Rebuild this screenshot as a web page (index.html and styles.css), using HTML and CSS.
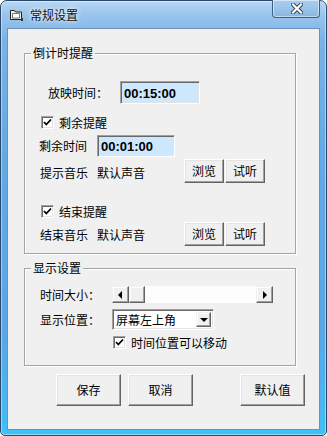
FILE: index.html
```html
<!DOCTYPE html>
<html lang="zh-CN">
<head>
<meta charset="utf-8">
<title>常规设置</title>
<link rel="stylesheet" href="styles.css">
</head>
<body>
<div class="window">
  <div class="titlebar">
    <svg class="app-icon" width="13" height="11" viewBox="0 0 13 11">
      <path d="M0.5 0.5 H4.5 L5.5 2 H11.5 V9.5 H0.5 Z" fill="#f4f1de" stroke="#1f1f1f"/>
      <path d="M2.5 3.5 H9.5 V8 H2.5 Z" fill="#fff" stroke="#555" stroke-width="0.8"/>
      <path d="M11 8 H13 V11 H11 Z" fill="#333"/>
    </svg>
    <span class="title">常规设置</span>
    <div class="close">
      <svg width="12" height="11" viewBox="0 0 12 11">
        <path d="M2 1.5 L10 9.5 M10 1.5 L2 9.5" stroke="#2d3a4a" stroke-width="4" stroke-linecap="square"/>
        <path d="M2 1.5 L10 9.5 M10 1.5 L2 9.5" stroke="#ffffff" stroke-width="2.2" stroke-linecap="square"/>
      </svg>
    </div>
  </div>
  <div class="client">
    <div class="group g1">
      <div class="group-title">倒计时提醒</div>
      <div class="row r-play">
        <span class="label w72">放映时间：</span>
        <div class="edit e-play">00:15:00</div>
      </div>
      <div class="row r-chk">
        <span class="check"><svg width="11" height="11" viewBox="0 0 11 11"><polyline points="2,5 4.3,7.5 9,2.5" fill="none" stroke="#000" stroke-width="1.8"/></svg></span>
        <span class="chk-text">剩余提醒</span>
      </div>
      <div class="row r-remain">
        <span class="label w58">剩余时间</span>
        <div class="edit e-remain">00:01:00</div>
      </div>
      <div class="row r-music1">
        <span class="txt w57">提示音乐</span>
        <span class="txt w87">默认声音</span>
        <button class="btn small">浏览</button>
        <button class="btn small second">试听</button>
      </div>
      <div class="row r-chk r-chk2">
        <span class="check"><svg width="11" height="11" viewBox="0 0 11 11"><polyline points="2,5 4.3,7.5 9,2.5" fill="none" stroke="#000" stroke-width="1.8"/></svg></span>
        <span class="chk-text">结束提醒</span>
      </div>
      <div class="row r-music2">
        <span class="txt w57">结束音乐</span>
        <span class="txt w87">默认声音</span>
        <button class="btn small">浏览</button>
        <button class="btn small second">试听</button>
      </div>
    </div>

    <div class="group g2">
      <div class="group-title">显示设置</div>
      <div class="row r-size">
        <span class="label w72">时间大小：</span>
        <div class="scrollbar">
          <span class="sb-btn"><span class="tri-left"></span></span>
          <span class="sb-thumb"></span>
          <span class="sb-track"></span>
          <span class="sb-btn"><span class="tri-right"></span></span>
        </div>
      </div>
      <div class="row r-pos">
        <span class="label w72">显示位置：</span>
        <div class="combo">
          <span class="combo-text">屏幕左上角</span>
          <span class="combo-btn"><span class="tri-down"></span></span>
        </div>
      </div>
      <div class="row r-chk r-move">
        <span class="check"><svg width="11" height="11" viewBox="0 0 11 11"><polyline points="2,5 4.3,7.5 9,2.5" fill="none" stroke="#000" stroke-width="1.8"/></svg></span>
        <span class="chk-text">时间位置可以移动</span>
      </div>
    </div>

    <div class="actions">
      <button class="btn big">保存</button>
      <button class="btn big cancel">取消</button>
      <button class="btn big defaults">默认值</button>
    </div>
  </div>
</div>
</body>
</html>
```

FILE: styles.css
```css
html, body {
  margin: 0;
  padding: 0;
  background: #fff;
}
body {
  font-family: "Noto Sans CJK SC", "Liberation Sans", sans-serif;
  font-size: 12px;
  color: #000;
}
.window {
  width: 327px;
  height: 436px;
  box-sizing: border-box;
  border: 1px solid #28476a;
  border-radius: 7px 7px 5px 5px;
  padding: 0 6px 5px 6px;
  display: flex;
  flex-direction: column;
  background: linear-gradient(180deg, #b8d7f3 0px, #98c4ec 14px, #78b3e7 40px, #62a9e5 160px, #5aa7e6 330px, #48b7f0 410px, #3ec2f6 436px);
  box-shadow: inset 0 0 0 1px rgba(255,255,255,0.45);
}
.titlebar {
  height: 27px;
  display: flex;
  align-items: center;
  padding-left: 3px;
}
.app-icon {
  flex: none;
  margin-top: 2px;
}
.title {
  margin-left: 7px;
  font-size: 12px;
  line-height: 14px;
  color: #111;
  text-shadow: 0 0 6px rgba(255,255,255,0.9), 0 0 3px rgba(255,255,255,0.8);
  margin-top: 1px;
}
.close {
  margin-left: auto;
  align-self: flex-start;
  margin-top: -1px;
  width: 48px;
  height: 18px;
  box-sizing: border-box;
  border: 1px solid #3a6088;
  border-top: none;
  border-radius: 0 0 4px 4px;
  background: linear-gradient(180deg, #a9cdef 0%, #9cc3ea 50%, #86b5e2 100%);
  box-shadow: inset 0 0 0 1px rgba(255,255,255,0.5);
  display: flex;
  align-items: center;
  justify-content: center;
  padding-left: 2px;
}
.client {
  flex: 1;
  background: #f0f0f0;
  border: 1px solid #6f8fb3;
  display: flex;
  flex-direction: column;
}
.group {
  box-sizing: border-box;
  width: 272px;
  margin-left: 16px;
  border: 1px solid #a5a5a5;
  box-shadow: inset 1px 1px #fff, 1px 1px #fff;
  display: flex;
  flex-direction: column;
}
.g1 {
  margin-top: 24px;
  height: 201px;
}
.g2 {
  margin-top: 14px;
  height: 98px;
}
.group-title {
  align-self: flex-start;
  margin-top: -9px;
  margin-left: 6px;
  padding: 0 2px;
  background: #f0f0f0;
  line-height: 16px;
  font-size: 12px;
}
.row {
  display: flex;
  align-items: center;
  flex: none;
}
.label, .txt {
  flex: none;
  line-height: 14px;
}
.w72 { width: 72px; }
.w58 { width: 58px; }
.w57 { width: 57px; }
.w87 { width: 87px; }

.r-play {
  margin-top: 20px;
  height: 23px;
  padding-left: 23px;
}
.r-chk {
  margin-top: 12px;
  height: 13px;
  padding-left: 16px;
}
.r-remain {
  margin-top: 6px;
  height: 22px;
  padding-left: 14px;
}
.r-music1 {
  margin-top: 2px;
  height: 24px;
  padding-left: 15px;
}
.r-music1 .txt { padding-top: 4px; }
.r-chk2 {
  margin-top: 22px;
}
.r-music2 {
  margin-top: 4px;
  height: 24px;
  padding-left: 15px;
}
.r-music2 .txt { padding-top: 2px; }

.edit {
  box-sizing: border-box;
  height: 100%;
  background: #cde7fc;
  border: 1px solid;
  border-color: #a0a0a0 #ffffff #ffffff #a0a0a0;
  box-shadow: inset 1px 1px #696969, inset -1px -1px #e3e3e3;
  font-family: "Liberation Sans", Arial, sans-serif;
  font-weight: bold;
  font-size: 13px;
  display: flex;
  align-items: center;
  padding-left: 3px;
  padding-top: 1px;
}
.e-play { width: 80px; }
.e-remain { width: 78px; }

.check {
  flex: none;
  box-sizing: border-box;
  width: 13px;
  height: 13px;
  background: #fff;
  border: 1px solid;
  border-color: #a0a0a0 #ffffff #ffffff #a0a0a0;
  box-shadow: inset 1px 1px #696969, inset -1px -1px #e3e3e3;
  display: flex;
  align-items: center;
  justify-content: center;
}
.check svg { display: block; }
.chk-text {
  margin-left: 5px;
  line-height: 14px;
}

.btn {
  font-family: "Noto Sans CJK SC", sans-serif;
  font-size: 12px;
  color: #000;
  background: #f0f0f0;
  box-sizing: border-box;
  border: 1px solid;
  border-color: #ffffff #646464 #646464 #ffffff;
  box-shadow: inset -1px -1px #a0a0a0, inset 1px 1px #e3e3e3;
  border-radius: 0;
  padding: 0;
  margin: 0;
  flex: none;
  display: flex;
  align-items: center;
  justify-content: center;
  line-height: 14px;
}
.btn.small {
  width: 40px;
  height: 24px;
}
.btn.small.second { margin-left: 1px; }
.btn.big {
  width: 65px;
  height: 32px;
}

.r-size {
  margin-top: 10px;
  height: 17px;
  padding-left: 15px;
}
.scrollbar {
  width: 161px;
  height: 17px;
  display: flex;
  background: #fdfdfd;
}
.sb-btn, .sb-thumb {
  flex: none;
  box-sizing: border-box;
  width: 17px;
  height: 17px;
  background: #f0f0f0;
  border: 1px solid;
  border-color: #f0f0f0 #646464 #646464 #f0f0f0;
  box-shadow: inset -1px -1px #a0a0a0, inset 1px 1px #fff;
  display: flex;
  align-items: center;
  justify-content: center;
}
.sb-thumb { width: 16px; }
.sb-track { flex: 1; }
.tri-left {
  width: 0; height: 0;
  border-top: 4px solid transparent;
  border-bottom: 4px solid transparent;
  border-right: 4px solid #000;
  margin-left: -1px;
}
.tri-right {
  width: 0; height: 0;
  border-top: 4px solid transparent;
  border-bottom: 4px solid transparent;
  border-left: 4px solid #000;
  margin-left: 1px;
}
.r-pos {
  margin-top: 6px;
  height: 21px;
  padding-left: 15px;
}
.combo {
  box-sizing: border-box;
  width: 102px;
  height: 21px;
  background: #fff;
  border: 1px solid;
  border-color: #a0a0a0 #ffffff #ffffff #a0a0a0;
  box-shadow: inset 1px 1px #696969, inset -1px -1px #e3e3e3;
  display: flex;
  align-items: center;
  padding: 2px 2px 2px 3px;
}
.combo-text {
  flex: 1;
  line-height: 14px;
}
.combo-btn {
  flex: none;
  box-sizing: border-box;
  width: 15px;
  height: 15px;
  background: #f0f0f0;
  border: 1px solid;
  border-color: #f0f0f0 #646464 #646464 #f0f0f0;
  box-shadow: inset -1px -1px #a0a0a0, inset 1px 1px #fff;
  display: flex;
  align-items: center;
  justify-content: center;
}
.tri-down {
  width: 0; height: 0;
  border-left: 4px solid transparent;
  border-right: 4px solid transparent;
  border-top: 4px solid #000;
  margin-top: 1px;
}
.r-move {
  margin-top: 6px;
  padding-left: 88px;
}
.actions {
  display: flex;
  margin-top: 8px;
  padding-left: 48px;
}
.btn.cancel { margin-left: 7px; }
.btn.defaults { margin-left: 47px; }
```
